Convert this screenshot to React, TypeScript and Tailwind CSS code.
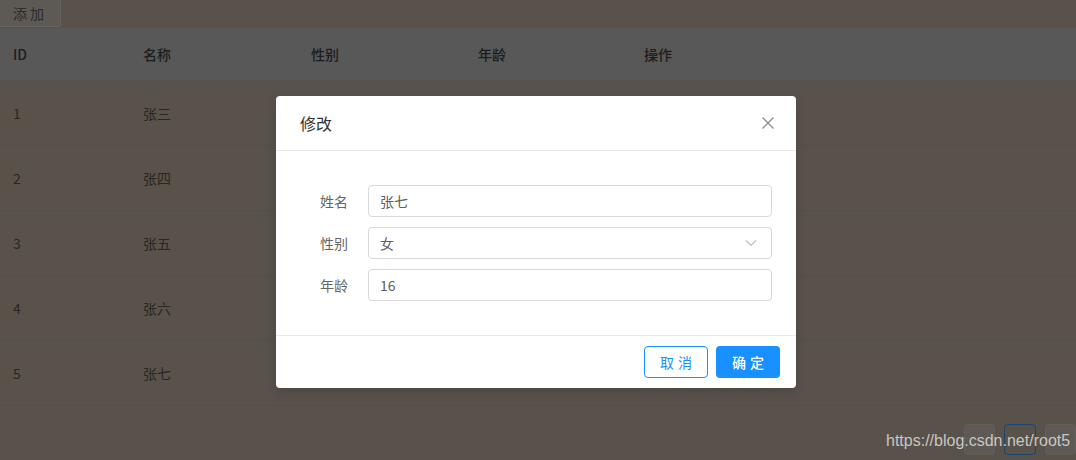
import React from "react";

const rows = [
  ["1", "张三"],
  ["2", "张四"],
  ["3", "张五"],
  ["4", "张六"],
  ["5", "张七"],
];

const font = { fontFamily: '"Noto Sans CJK SC", "Noto Sans", sans-serif' };

export default function App() {
  return (
    <div className="relative w-[1076px] h-[460px] overflow-hidden bg-[#58524b]" style={font}>
      <div className="flex">
        <button className="h-[27px] w-[61px] bg-[#5d5954] border border-[#66625c] border-t-0 border-l-0 rounded-br-[4px] text-[14px] text-[#2e2b28] flex items-center pl-[13px] tracking-[3px]">
          添加
        </button>
      </div>
      <div className="mt-[1px]">
        <div className="grid grid-cols-[130px_168px_167px_166px_1fr] h-[53px] items-center pl-[13px] bg-[#585858] border-b border-[#54524f] text-[14px] text-[#1d1d1d] font-medium">
          <div>ID</div>
          <div>名称</div>
          <div>性别</div>
          <div>年龄</div>
          <div>操作</div>
        </div>
        {rows.map((r) => (
          <div
            key={r[0]}
            className="grid grid-cols-[130px_168px_167px_166px_1fr] h-[65px] items-center pl-[13px] border-b border-[#544f48] text-[14px] text-[#2a2723]"
          >
            <div>{r[0]}</div>
            <div>{r[1]}</div>
            <div></div>
            <div></div>
            <div></div>
          </div>
        ))}
      </div>

      {/* pagination */}
      <div className="absolute left-[964px] top-[424px] flex gap-[9px]">
        <div className="w-[31px] h-[31px] rounded-[4px] bg-[#5d5954] border border-[#625e59]"></div>
        <div className="w-[32px] h-[31px] rounded-[4px] bg-[#58524b] border border-[#1c4470]"></div>
        <div className="w-[31px] h-[31px] rounded-[4px] bg-[#5d5954] border border-[#625e59]"></div>
      </div>
      <div
        className="absolute left-[886px] top-[429px] text-[16px] text-[#d6d3cf] opacity-90"
        style={{ fontFamily: '"Liberation Sans", Arial, sans-serif' }}
      >
        https://blog.csdn.net/root5
      </div>

      {/* modal */}
      <div className="absolute left-[276px] top-[96px] w-[520px] bg-white rounded-[4px] shadow-[0_4px_12px_rgba(0,0,0,0.15)]">
        <div className="h-[55px] px-[24px] flex items-center justify-between border-b border-[#e8e8e8]">
          <span className="text-[16px] text-[#333333]">修改</span>
          <svg width="14" height="14" viewBox="0 0 14 14" className="mr-[-3px]">
            <path d="M1.5 1.5 L12.5 12.5 M12.5 1.5 L1.5 12.5" stroke="#8c8c8c" strokeWidth="1.3" fill="none" />
          </svg>
        </div>
        <div className="px-[24px] py-[34px] flex flex-col gap-[10px]">
          {[
            ["姓名", "张七", false],
            ["性别", "女", true],
            ["年龄", "16", false],
          ].map(([label, val, sel]) => (
            <div key={label as string} className="flex items-center">
              <div className="w-[48px] text-right text-[14px] text-[#666666]">{label}</div>
              <div className="ml-[20px] w-[404px] h-[32px] border border-[#d9d9d9] rounded-[4px] flex items-center justify-between pl-[11px] pr-[14px] text-[14px] text-[#606060]">
                <span>{val}</span>
                {sel ? (
                  <svg width="12" height="8" viewBox="0 0 12 8">
                    <path d="M1 1.5 L6 6.5 L11 1.5" stroke="#bfbfbf" strokeWidth="1.2" fill="none" />
                  </svg>
                ) : null}
              </div>
            </div>
          ))}
        </div>
        <div className="border-t border-[#e8e8e8] px-[16px] py-[10px] flex justify-end gap-[8px]">
          <button className="w-[64px] h-[32px] rounded-[4px] border border-[#1890ff] text-[#1890ff] text-[14px] tracking-[4px] pl-[4px] bg-white">
            取消
          </button>
          <button className="w-[64px] h-[32px] rounded-[4px] bg-[#1890ff] text-white text-[14px] tracking-[4px] pl-[4px] font-medium">
            确定
          </button>
        </div>
      </div>
    </div>
  );
}
